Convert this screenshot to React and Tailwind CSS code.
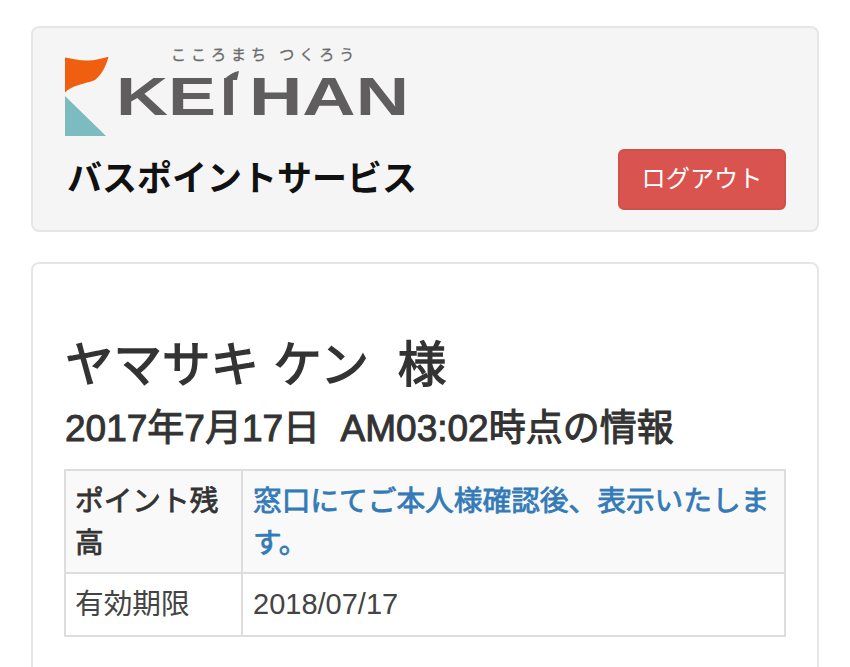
const font = { fontFamily: '"Liberation Sans", "Noto Sans CJK JP", sans-serif' };
const cjk = { fontFamily: '"Noto Sans CJK JP", sans-serif' };

function Logo() {
  return (
    <svg width="345" height="100" viewBox="0 0 345 100" className="block">
      <path d="M0 17.5 C8 19 14 20.5 22 20.5 C30 20.5 37 18.5 43.5 16.7 C41 27 36 35 30 40 C20 44 7 45 0 52.5 Z" fill="#ef5f0f" />
      <path d="M0 56 L41 96 L0 96 Z" fill="#7cbcc0" />
      <text x="106" y="20" fontSize="15" letterSpacing="5" fill="#6a6a6a" stroke="#6a6a6a" strokeWidth="0.3" fontFamily='"Noto Sans CJK JP", sans-serif'>こころまち つくろう</text>
      <g fontSize="53" fontWeight="700" fill="#5f5d5d" fontFamily='"Liberation Sans", sans-serif'>
        <text x="51" y="75" textLength="100" lengthAdjust="spacingAndGlyphs">KE</text>
        <text x="155" y="75" textLength="17" lengthAdjust="spacingAndGlyphs">I</text>
        <text x="184" y="75" textLength="160" lengthAdjust="spacingAndGlyphs">HAN</text>
      </g>
      <path d="M159 40 C162 36 168 32 174 31 L172 40 Z" fill="#5f5d5d" />
    </svg>
  );
}

export default function App() {
  return (
    <div style={font} className="h-[667px] overflow-hidden bg-white px-[31px] pt-[26px] text-[#333]">
      <header className="flex h-[206px] items-end justify-between rounded-lg border-2 border-[#e6e6e6] bg-[#f5f5f5] pb-[20px] pl-[32px] pr-[31px]">
        <div className="pb-[12px]">
          <Logo />
          <div style={cjk} className="mt-[14px] ml-[2px] text-[35px] leading-[44px] font-bold text-[#111]">バスポイントサービス</div>
        </div>
        <button className="flex h-[61px] w-[168px] items-center justify-center rounded-[6px] border-2 border-[#d0504c] bg-[#d9534f] text-[24.2px] text-[#fff]">
          ログアウト
        </button>
      </header>

      <main className="mt-[30px] h-[500px] rounded-lg border-2 border-[#e6e6e6] bg-white pl-[32px] pr-[31px] pt-[67px]">
        <h2 style={cjk} className="text-[48.5px] leading-[60px] font-normal whitespace-pre [word-spacing:3.5px] [-webkit-text-stroke:1.4px_#333]">ヤマサキ ケン  様</h2>
        <h4 className="mt-[14px] text-[37px] leading-[48px] font-normal whitespace-pre [-webkit-text-stroke:1px_#333]">2017年7月17日  AM03:02時点の情報</h4>
        <table className="mt-[16px] -ml-[1px] w-[722px] border-collapse text-[28.7px]">
          <tbody>
            <tr className="h-[103px] bg-[#f9f9f9]">
              <th style={cjk} className="w-[177px] border-2 border-[#ddd] px-[9px] pb-[4px] text-left align-middle text-[28.7px] leading-[42px] font-normal [-webkit-text-stroke:0.8px_#333]">ポイント残高</th>
              <td style={cjk} className="border-2 border-[#ddd] px-[10px] pb-[4px] align-middle text-[28.7px] leading-[42px] font-normal text-[#337ab7] [-webkit-text-stroke:0.8px_#337ab7]">窓口にてご本人様確認後、表示いたします。</td>
            </tr>
            <tr className="h-[63px]">
              <td className="border-2 border-[#ddd] px-[9px] align-middle text-[#444]">有効期限</td>
              <td className="border-2 border-[#ddd] px-[10px] align-middle text-[29px] text-[#444]">2018/07/17</td>
            </tr>
          </tbody>
        </table>
      </main>
    </div>
  );
}
